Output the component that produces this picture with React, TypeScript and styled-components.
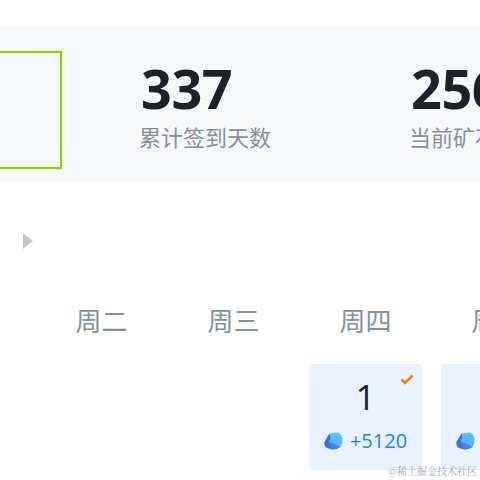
import React from "react";
import styled, { createGlobalStyle } from "styled-components";

const GlobalStyle = createGlobalStyle`
  html, body {
    margin: 0;
    padding: 0;
    background: #fff;
  }
  body {
    font-family: "Open Sans", "Noto Sans CJK SC", sans-serif;
  }
`;

const Page = styled.div`
  position: relative;
  width: 480px;
  height: 480px;
  overflow: hidden;
  padding-top: 26px;
  box-sizing: border-box;
`;

const StatsBar = styled.section`
  display: flex;
  align-items: center;
  height: 155px;
  background: #f7f8fa;
`;

const TodayBox = styled.div`
  flex: none;
  width: 100px;
  height: 118px;
  margin: 13px 0 0 -38px;
  box-sizing: border-box;
  border: 2px solid #9c0;
  box-shadow: 0 0 1px #9c0;
`;

const Stat = styled.div<{ $gap: number }>`
  flex: none;
  width: 240px;
  margin-left: ${(p) => p.$gap}px;
  padding-top: 2px;
  white-space: nowrap;
`;

const StatValue = styled.div`
  font-size: 54px;
  line-height: 60px;
  font-weight: 700;
  letter-spacing: -0.5px;
  color: #1d2129;
`;

const StatLabel = styled.div`
  margin: 2px 0 0 -2px;
  font-size: 22px;
  line-height: 32px;
  color: #86909c;
  font-family: "Noto Sans CJK SC", sans-serif;
`;

const MonthBar = styled.div`
  display: flex;
  align-items: center;
  height: 120px;
  padding-left: 23px;
`;

const ArrowRight = styled.span`
  width: 0;
  height: 0;
  border-style: solid;
  border-width: 8px 0 8px 10px;
  border-color: transparent transparent transparent #c2c8d2;
`;

const Calendar = styled.section`
  display: grid;
  grid-template-columns: repeat(7, 113px);
  column-gap: 19px;
  margin-left: -87px;
`;

const WeekDay = styled.div`
  height: 63px;
  text-align: center;
  font-size: 26px;
  line-height: 38px;
  color: #86909c;
  font-family: "Noto Sans CJK SC", sans-serif;
`;

const DayCell = styled.div<{ $empty?: boolean }>`
  position: relative;
  height: 106px;
  border-radius: 4px;
  background: ${(p) => (p.$empty ? "transparent" : "#e8f3ff")};
`;

const DayNumber = styled.div`
  padding-top: 11px;
  text-align: center;
  font-size: 35px;
  line-height: 44px;
  font-weight: 400;
  color: #1d2129;
`;

const Reward = styled.div`
  display: flex;
  align-items: center;
  justify-content: center;
  gap: 7px;
  margin-top: 8px;
  font-size: 20px;
  line-height: 28px;
  color: #1e80ff;
  white-space: nowrap;
`;

const CheckMark = styled.svg`
  position: absolute;
  top: 8px;
  right: 8px;
  width: 14px;
  height: 14px;
`;

const Watermark = styled.div`
  position: absolute;
  right: 3px;
  bottom: 2px;
  font-size: 10px;
  line-height: 14px;
  color: #a0a5ad;
  font-family: "Noto Serif CJK SC", "Noto Sans CJK SC", sans-serif;
  text-shadow: 0 0 2px #fff;
`;

const Ore: React.FC = () => (
  <svg width="19" height="18" viewBox="0 0 19 18">
    <defs>
      <linearGradient id="ore" x1="0.2" y1="0" x2="0.8" y2="1">
        <stop offset="0" stopColor="#62c0f8" />
        <stop offset="1" stopColor="#52b4f8" />
      </linearGradient>
    </defs>
    <path d="M5.5 1.5 L14 0.5 Q17 2 18.5 6 Q19 11 16.5 15 Q13 17.5 8 17.5 L2 15.5 Q0 13 0.5 10 Z" fill="url(#ore)" />
    <path d="M0.5 10 L5.5 1.5 L6.5 6 L5 9.5 L8 17.5 L2 15.5 Q0 13 0.5 10 Z" fill="#3d72dd" />
    <path d="M5 9.5 L13 13 L16.5 15 Q13 17.5 8 17.5 Z" fill="#3f82e8" />
  </svg>
);

const days = ["周一", "周二", "周三", "周四", "周五", "周六", "周日"];
const rewards = [
  { day: 1, points: 5120, done: true },
  { day: 2, points: 5120, done: false },
];

const App: React.FC = () => {
  return (
    <Page>
      <GlobalStyle />
      <StatsBar>
        <TodayBox />
        <Stat $gap={79}>
          <StatValue>337</StatValue>
          <StatLabel>累计签到天数</StatLabel>
        </Stat>
        <Stat $gap={30}>
          <StatValue>2560</StatValue>
          <StatLabel>当前矿石数</StatLabel>
        </Stat>
      </StatsBar>
      <MonthBar>
        <ArrowRight />
      </MonthBar>
      <Calendar>
        {days.map((d) => (
          <WeekDay key={d}>{d}</WeekDay>
        ))}
        <DayCell $empty />
        <DayCell $empty />
        <DayCell $empty />
        {rewards.map((r) => (
          <DayCell key={r.day}>
            {r.done && (
              <CheckMark viewBox="0 0 14 14">
                <path d="M1.5 7.5 L5 11 L12.5 3.5" fill="none" stroke="#ff7d00" strokeWidth="2.6" />
              </CheckMark>
            )}
            <DayNumber>{r.day}</DayNumber>
            <Reward>
              <Ore />
              <span>+{r.points}</span>
            </Reward>
          </DayCell>
        ))}
      </Calendar>
      <Watermark>@稀土掘金技术社区</Watermark>
    </Page>
  );
};

export default App;
